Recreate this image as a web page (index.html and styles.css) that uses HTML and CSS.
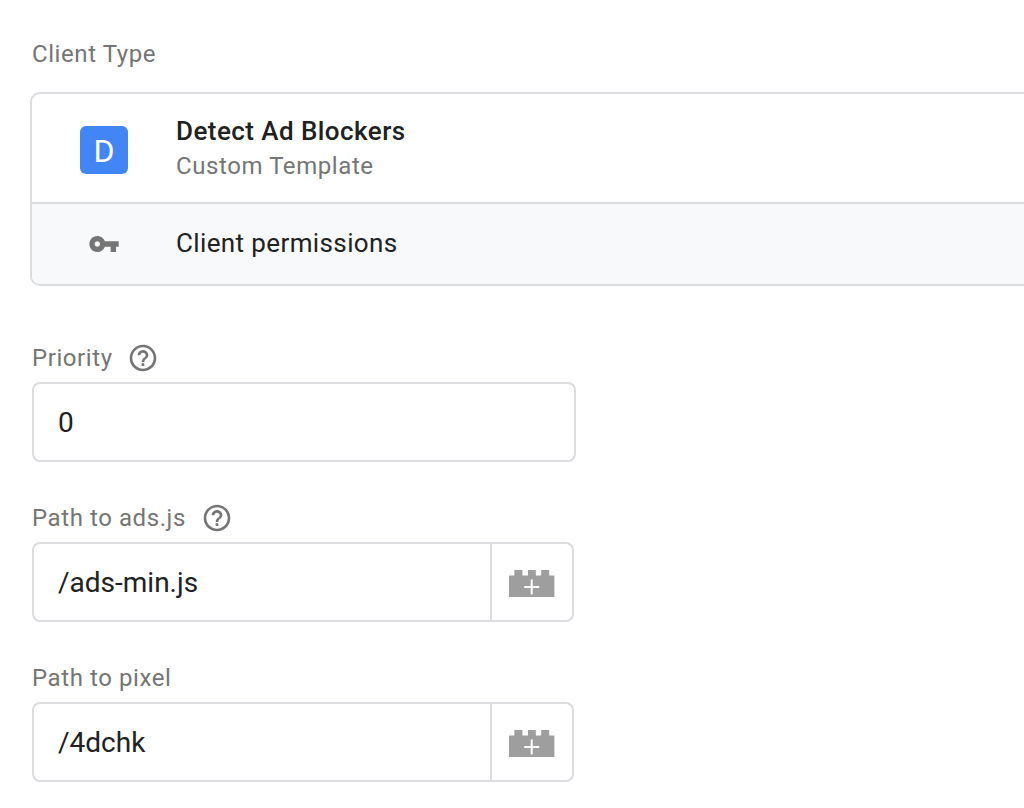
FILE: index.html
```
<!DOCTYPE html>
<html lang="en">
<head>
<meta charset="utf-8">
<title>Client configuration</title>
<link rel="stylesheet" href="styles.css">
</head>
<body>
<main class="page">
  <div class="label label-type">Client Type</div>
  <section class="card">
    <div class="type-row">
      <div class="badge">D</div>
      <div class="type-text">
        <div class="type-name">Detect Ad Blockers</div>
        <div class="type-sub">Custom Template</div>
      </div>
    </div>
    <div class="perm-row">
      <svg class="key" viewBox="0 0 24 24"><path d="M12.650 10C11.830 7.670 9.610 6 7 6c-3.310 0-6 2.690-6 6s2.690 6 6 6c2.610 0 4.830-1.670 5.650-4H17v4h4v-4h2v-4H12.650zM7 14c-1.100 0-2-.9-2-2s.9-2 2-2 2 .9 2 2-.9 2-2 2z"/></svg>
      <span class="perm-text">Client permissions</span>
    </div>
  </section>
  <div class="field">
    <div class="label"><span>Priority</span><svg class="help" viewBox="0 0 24 24"><path d="M11 18h2v-2h-2v2zm1-16C6.480 2 2 6.480 2 12s4.480 10 10 10 10-4.480 10-10S17.520 2 12 2zm0 18c-4.410 0-8-3.590-8-8s3.590-8 8-8 8 3.590 8 8-3.590 8-8 8zm0-14c-2.210 0-4 1.790-4 4h2c0-1.100.9-2 2-2s2 .9 2 2c0 2-3 1.750-3 5h2c0-2.250 3-2.500 3-5 0-2.210-1.790-4-4-4z"/></svg></div>
    <div class="input wide">0</div>
  </div>
  <div class="field">
    <div class="label"><span>Path to ads.js</span><svg class="help" viewBox="0 0 24 24"><path d="M11 18h2v-2h-2v2zm1-16C6.480 2 2 6.480 2 12s4.480 10 10 10 10-4.480 10-10S17.520 2 12 2zm0 18c-4.410 0-8-3.590-8-8s3.590-8 8-8 8 3.590 8 8-3.590 8-8 8zm0-14c-2.210 0-4 1.790-4 4h2c0-1.100.9-2 2-2s2 .9 2 2c0 2-3 1.750-3 5h2c0-2.250 3-2.500 3-5 0-2.210-1.790-4-4-4z"/></svg></div>
    <div class="input"><span class="value">/ads-min.js</span><span class="picker"><svg class="brick" viewBox="0 0 46 28"><path fill="#9e9e9e" d="M0 28V6.500H5.300V1H13.300V6.500H19V1H26.800V6.500H32.200V1H40.200V6.500H45.400V28Z"/><path stroke="#fff" stroke-width="2" d="M15.200 18H30.200M22.700 10.500V25.500"/></svg></span></div>
  </div>
  <div class="field">
    <div class="label"><span>Path to pixel</span></div>
    <div class="input"><span class="value">/4dchk</span><span class="picker"><svg class="brick" viewBox="0 0 46 28"><path fill="#9e9e9e" d="M0 28V6.500H5.300V1H13.300V6.500H19V1H26.800V6.500H32.200V1H40.200V6.500H45.400V28Z"/><path stroke="#fff" stroke-width="2" d="M15.200 18H30.200M22.700 10.500V25.500"/></svg></span></div>
  </div>
</main>
</body>
</html>
```
FILE: styles.css
```
* { box-sizing: border-box; }
body { margin: 0; background: #fff; color: #212121; font-family: Roboto, "Liberation Sans", sans-serif; overflow: hidden; }
.page { padding: 38px 0 0 32px; }
.label { display: flex; align-items: center; gap: 14.6px; height: 32px; font-size: 24px; line-height: 32px; letter-spacing: 0.58px; color: #757575; }
.label-type { margin-bottom: 22px; }
.card { height: 194px; margin-left: -2px; border: 2px solid #dadce0; border-right: 0; border-radius: 10px 0 0 10px; overflow: hidden; }
.type-row { display: flex; align-items: flex-start; height: 108px; padding: 20px 0 0 48px; gap: 48px; }
.badge { width: 48px; height: 48px; margin-top: 12px; border-radius: 6px; background: #4285f4; color: #fff; font-size: 32px; line-height: 50px; text-align: center; }
.type-name { font-size: 26px; line-height: 34px; font-weight: 500; letter-spacing: 0.44px; }
.type-sub { font-size: 24px; line-height: 36px; letter-spacing: 0.58px; color: #757575; }
.perm-row { display: flex; align-items: center; height: 82px; padding-left: 56px; gap: 56px; border-top: 2px solid #dadce0; background: #f8f9fb; font-size: 26px; letter-spacing: 0.38px; }
.perm-text { padding-bottom: 2px; }
.key { width: 32px; height: 32px; fill: #757575; }
.field { height: 160px; }
.card + .field { margin-top: 56px; }
.help { width: 32px; height: 32px; fill: #757575; }
.input { display: flex; align-items: center; width: 542px; height: 80px; margin-top: 8px; border: 2px solid #dadce0; border-radius: 8px; font-size: 28px; }
.wide { width: 544px; padding-left: 24px; }
.value { flex: 1; padding-left: 24px; }
.picker { display: flex; align-items: center; justify-content: center; width: 82px; height: 76px; border-left: 2px solid #dadce0; }
.brick { width: 46px; height: 28px; margin-top: 2px; }
```
